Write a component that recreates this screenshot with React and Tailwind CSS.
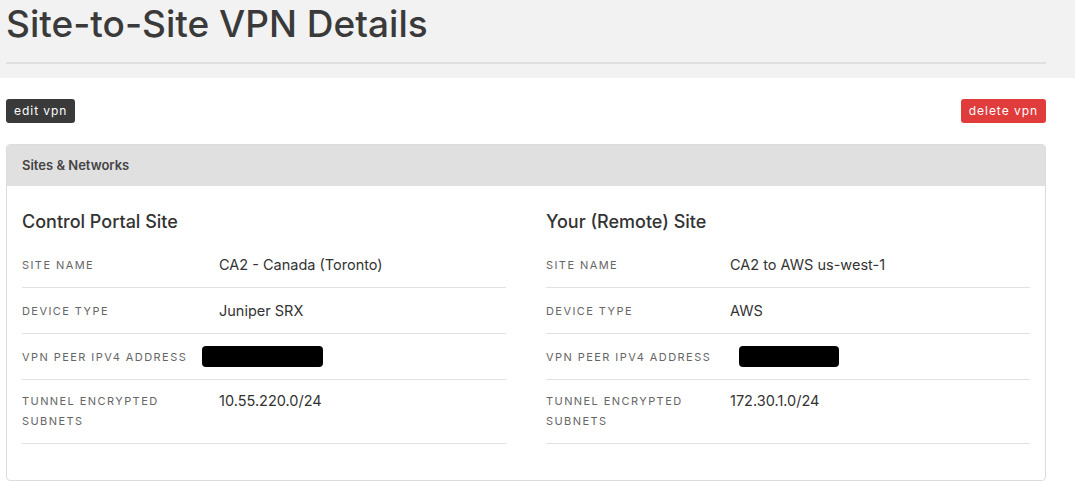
import React from 'react';

const sites = [
  {
    title: 'Control Portal Site',
    labelWidth: 'w-[197px]',
    redact: 'w-[121px] -ml-[17px]',
    rows: [
      { label: 'Site Name', value: 'CA2 - Canada (Toronto)' },
      { label: 'Device Type', value: 'Juniper SRX' },
      { label: 'VPN Peer IPv4 Address', redacted: true },
      { label: 'Tunnel Encrypted Subnets', value: '10.55.220.0/24', wrap: true },
    ],
  },
  {
    title: 'Your (Remote) Site',
    labelWidth: 'w-[184px]',
    redact: 'w-[100px] ml-[9px]',
    rows: [
      { label: 'Site Name', value: 'CA2 to AWS us-west-1' },
      { label: 'Device Type', value: 'AWS' },
      { label: 'VPN Peer IPv4 Address', redacted: true },
      { label: 'Tunnel Encrypted Subnets', value: '172.30.1.0/24', wrap: true },
    ],
  },
];

const SiteColumn = ({ site }) => (
  <div className="flex-1">
    <h3 className="text-[18px] font-medium text-[#333] leading-none mb-[11px]">{site.title}</h3>
    <div>
      {site.rows.map((row) => (
        <div
          key={row.label}
          className={`flex items-start border-b border-[#e2e2e2] pb-[12px] ${row.wrap ? 'pt-[11px]' : 'pt-[13px]'}`}
        >
          <div className={`${site.labelWidth} shrink-0 text-[11px] uppercase tracking-[0.13em] text-[#666] leading-[20px] ${row.wrap ? 'pr-[40px]' : ''}`}>
            {row.label}
          </div>
          {row.redacted ? (
            <div className={`${site.redact} h-[21px] bg-black rounded-[4px] -mt-[1px]`} />
          ) : (
            <div className="text-[14.5px] text-[#333] leading-[20px]">{row.value}</div>
          )}
        </div>
      ))}
    </div>
  </div>
);

export default function App() {
  return (
    <div className="w-[1075px] h-[482px] bg-white font-['Inter',sans-serif] overflow-hidden">
      <div className="bg-[#f2f2f2] h-[78px] pl-[6px] pr-[29px]">
        <h1 className="text-[37px] font-medium text-[#3a3a3a] leading-none pt-[5px] h-[62px]">
          Site-to-Site VPN Details
        </h1>
        <div className="h-[2px] bg-[#e0e0e0]" />
      </div>

      <div className="px-[6px]">
        <div className="flex justify-between mt-[21px] w-[1040px]">
          <button className="bg-[#3a3a3a] text-white text-[12px] tracking-[0.08em] px-[8px] h-[24px] rounded-[3px]">
            edit vpn
          </button>
          <button className="bg-[#e03c3c] text-white text-[12px] tracking-[0.08em] px-[8px] h-[24px] rounded-[3px]">
            delete vpn
          </button>
        </div>

        <div className="mt-[21px] w-[1040px] border border-[#dcdcdc] rounded-[4px] overflow-hidden">
          <div className="bg-[#e0e0e0] h-[41px] flex items-center px-[15px] text-[13px] font-semibold text-[#444]">
            Sites &amp; Networks
          </div>
          <div className="flex gap-[40px] px-[15px] pt-[27px] pb-[36px]">
            {sites.map((s) => (
              <SiteColumn key={s.title} site={s} />
            ))}
          </div>
        </div>
      </div>
    </div>
  );
}
